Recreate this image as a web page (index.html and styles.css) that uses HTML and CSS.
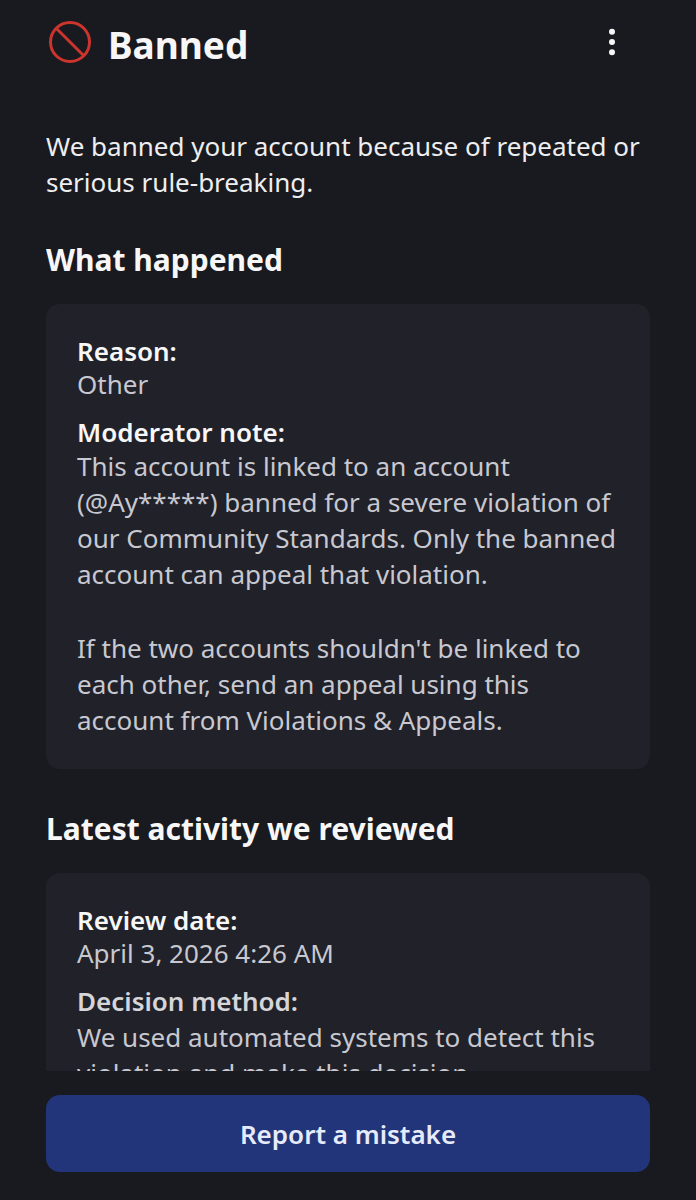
FILE: index.html
```html
<!DOCTYPE html>
<html lang="en">
<head>
<meta charset="utf-8">
<meta name="viewport" content="width=device-width, initial-scale=1">
<title>Banned</title>
<link rel="stylesheet" href="styles.css">
</head>
<body>
<div class="screen">
  <header class="header">
    <svg class="ban" viewBox="0 0 44 44" aria-hidden="true"><circle cx="22" cy="22" r="19.5"/><path d="M8.2 8.2 35.8 35.8"/></svg>
    <h1 class="title">Banned</h1>
    <button class="more" type="button" aria-label="More options">
      <svg class="dots" viewBox="0 0 8 28" aria-hidden="true"><circle cx="4" cy="3.7" r="3"/><circle cx="4" cy="14" r="3"/><circle cx="4" cy="24.3" r="3"/></svg>
    </button>
  </header>
  <main class="content">
    <p class="intro">We banned your account because of repeated or serious rule-breaking.</p>
    <section class="section">
      <h2 class="heading">What happened</h2>
      <div class="card">
        <h3 class="label">Reason:</h3>
        <p class="value">Other</p>
        <h3 class="label">Moderator note:</h3>
        <p class="note">This account is linked to an account (@Ay*****) banned for a severe violation of our Community Standards. Only the banned account can appeal that violation.</p>
        <p class="note note-next">If the two accounts shouldn't be linked to each other, send an appeal using this account from Violations &amp; Appeals.</p>
      </div>
    </section>
    <section class="section">
      <h2 class="heading">Latest activity we reviewed</h2>
      <div class="card">
        <h3 class="label">Review date:</h3>
        <p class="value">April 3, 2026 4:26 AM</p>
        <h3 class="label label-soft">Decision method:</h3>
        <p class="note">We used automated systems to detect this violation and make this decision.</p>
      </div>
    </section>
  </main>
  <footer class="footer">
    <button class="report" type="button">Report a mistake</button>
  </footer>
</div>
</body>
</html>
```

FILE: styles.css
```css
* { box-sizing: border-box; margin: 0; padding: 0; }
body {
  background: #191a1f;
  color: #f7f7f8;
  font-family: "Noto Sans", "Open Sans", sans-serif;
  font-size: 26px;
}
.screen { display: flex; flex-direction: column; height: 100vh; padding: 0 46px; }
.header { display: flex; align-items: center; gap: 16px; height: 84px; flex: none; padding: 0 24px 0 2px; }
.ban { width: 44px; height: 44px; fill: none; stroke: #cc342e; stroke-width: 3; }
.title { flex: 1; font-size: 37px; font-weight: 700; line-height: 48px; padding-top: 6px; }
.more { display: flex; justify-content: center; width: 28px; background: none; border: 0; }
.dots { width: 8px; height: 28px; fill: #f7f7f8; }
.content { flex: 1; min-height: 0; overflow: hidden; padding-top: 44px; }
.intro { line-height: 36px; color: #eeeef0; }
.section { padding-top: 40px; }
.heading { font-size: 30px; font-weight: 700; line-height: 40px; margin-bottom: 24px; }
.card { background: #202129; border-radius: 14px; padding: 31px; }
.label { font-size: 26px; font-weight: 600; line-height: 32px; }
.label-soft { color: #d5d5da; padding-bottom: 2px; }
.value { color: #c8c8d0; line-height: 34px; margin-bottom: 15px; }
.note { color: #c8c8d0; line-height: 36px; }
.note-next { margin-top: 38px; }
.footer { flex: none; padding: 24px 0 28px; }
.report {
  display: block; width: 100%; height: 77px; border: 0; border-radius: 14px;
  background: #22357a; color: #e6ebfa; font: inherit; font-weight: 600;
}
```
